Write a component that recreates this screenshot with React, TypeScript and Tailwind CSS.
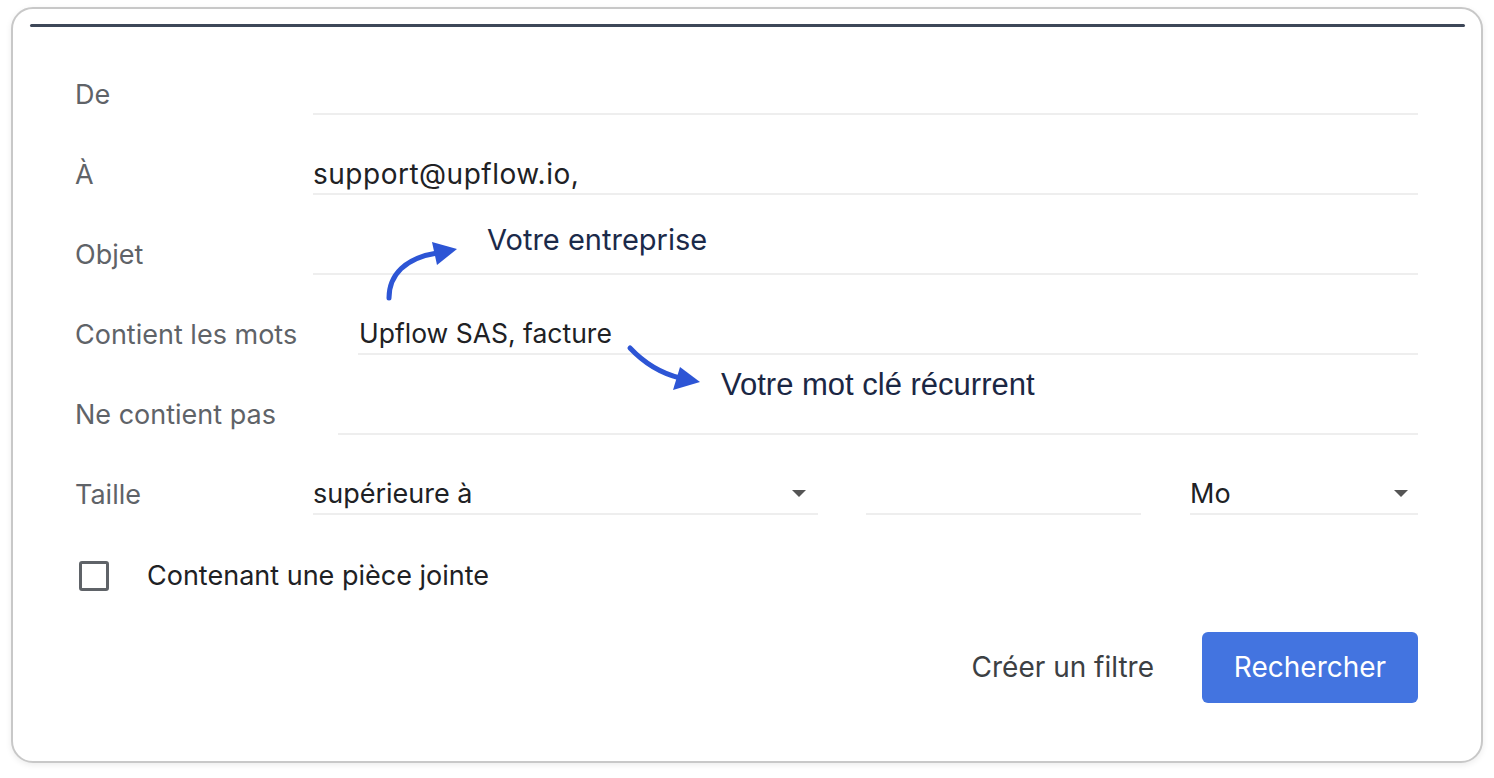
import React from 'react';

const labelCls = 'w-[238px] shrink-0 h-[40px] flex items-center text-[27px] text-[#5f6368]';
const fieldCls = 'flex-1 h-[40px] flex items-center border-b-2 border-[#eeeeee] text-[28px] text-[#202124]';

const Caret = () => (
  <svg width="14" height="8" viewBox="0 0 14 8" className="shrink-0">
    <path d="M0 0 L14 0 L7 7 Z" fill="#555" />
  </svg>
);

const Row = ({ label, value, offset = '' }: { label: string; value?: string; offset?: string }) => (
  <div className="h-[80px] flex items-end">
    <div className={labelCls}>{label}</div>
    <div className={`${fieldCls} ${offset}`}>{value}</div>
  </div>
);

export default function App() {
  return (
    <div className="relative w-[1494px] h-[778px] bg-white pt-[7px] pl-[11px] font-['Inter',sans-serif]">
      <div className="w-[1472px] h-[756px] border-2 border-[#c8c8c8] rounded-[22px] bg-white shadow-[0_2px_6px_rgba(0,0,0,0.08)]">
        <div className="mt-[15px] ml-[17px] mr-[16px] h-[3px] bg-[#3d4758] rounded-full" />

        <div className="mt-[8px] pl-[62px] pr-[63px]">
          <Row label="De" />
          <Row label="À" value="support@upflow.io," offset="tracking-[0.5px]" />
          <Row label="Objet" />
          <div className="h-[80px] flex items-end">
            <div className={labelCls}>Contient les mots</div>
            <div className={`${fieldCls} ml-[45px] pl-[1px] !text-[26.5px] text-[#1f1f1f]`}>Upflow SAS, facture</div>
          </div>
          <Row label="Ne contient pas" offset="ml-[25px]" />

          <div className="h-[80px] flex items-end">
            <div className={labelCls}>Taille</div>
            <div className="w-[505px] h-[40px] flex items-center justify-between pr-[12px] border-b-2 border-[#eeeeee] text-[27px] text-[#202124]">
              <span>supérieure à</span>
              <Caret />
            </div>
            <div className="w-[275px] ml-[48px] h-[40px] border-b-2 border-[#eeeeee]" />
            <div className="w-[228px] ml-[49px] h-[40px] flex items-center justify-between pr-[10px] border-b-2 border-[#eeeeee] text-[27px] text-[#202124]">
              <span>Mo</span>
              <Caret />
            </div>
          </div>

          <div className="mt-[41px] flex items-center">
            <div className="ml-[4px] w-[30px] h-[30px] border-[3px] border-[#5f6368] rounded-[3px]" />
            <span className="ml-[38px] text-[27px] text-[#202124]">Contenant une pièce jointe</span>
          </div>

          <div className="mt-[35px] flex items-center justify-end">
            <button className="text-[28px] text-[#3c4043]">Créer un filtre</button>
            <button className="ml-[48px] w-[216px] h-[71px] rounded-[6px] bg-[#4374e0] text-white text-[28px]">Rechercher</button>
          </div>
        </div>
      </div>

      {/* annotations laid over the form */}
      <span className="absolute left-[487px] top-[225px] text-[29px] leading-none text-[#1b2a4a]">Votre entreprise</span>
      <span className="absolute left-[721px] top-[369px] text-[31px] leading-none text-[#1b2744] font-['Liberation_Sans',sans-serif]">Votre mot clé récurrent</span>
      <svg className="absolute left-0 top-0 pointer-events-none" width="1494" height="778" viewBox="0 0 1494 778">
        <path d="M389 298 C389 275 405 258 437 253" stroke="#2d55d5" strokeWidth="5" fill="none" strokeLinecap="round" />
        <path d="M457 249 L432 242 L437 265 Z" fill="#2d55d5" />
        <path d="M630 348 C645 364 660 373 680 378" stroke="#2d55d5" strokeWidth="5" fill="none" strokeLinecap="round" />
        <path d="M700 382 L680 367 L673 390 Z" fill="#2d55d5" />
      </svg>
    </div>
  );
}
